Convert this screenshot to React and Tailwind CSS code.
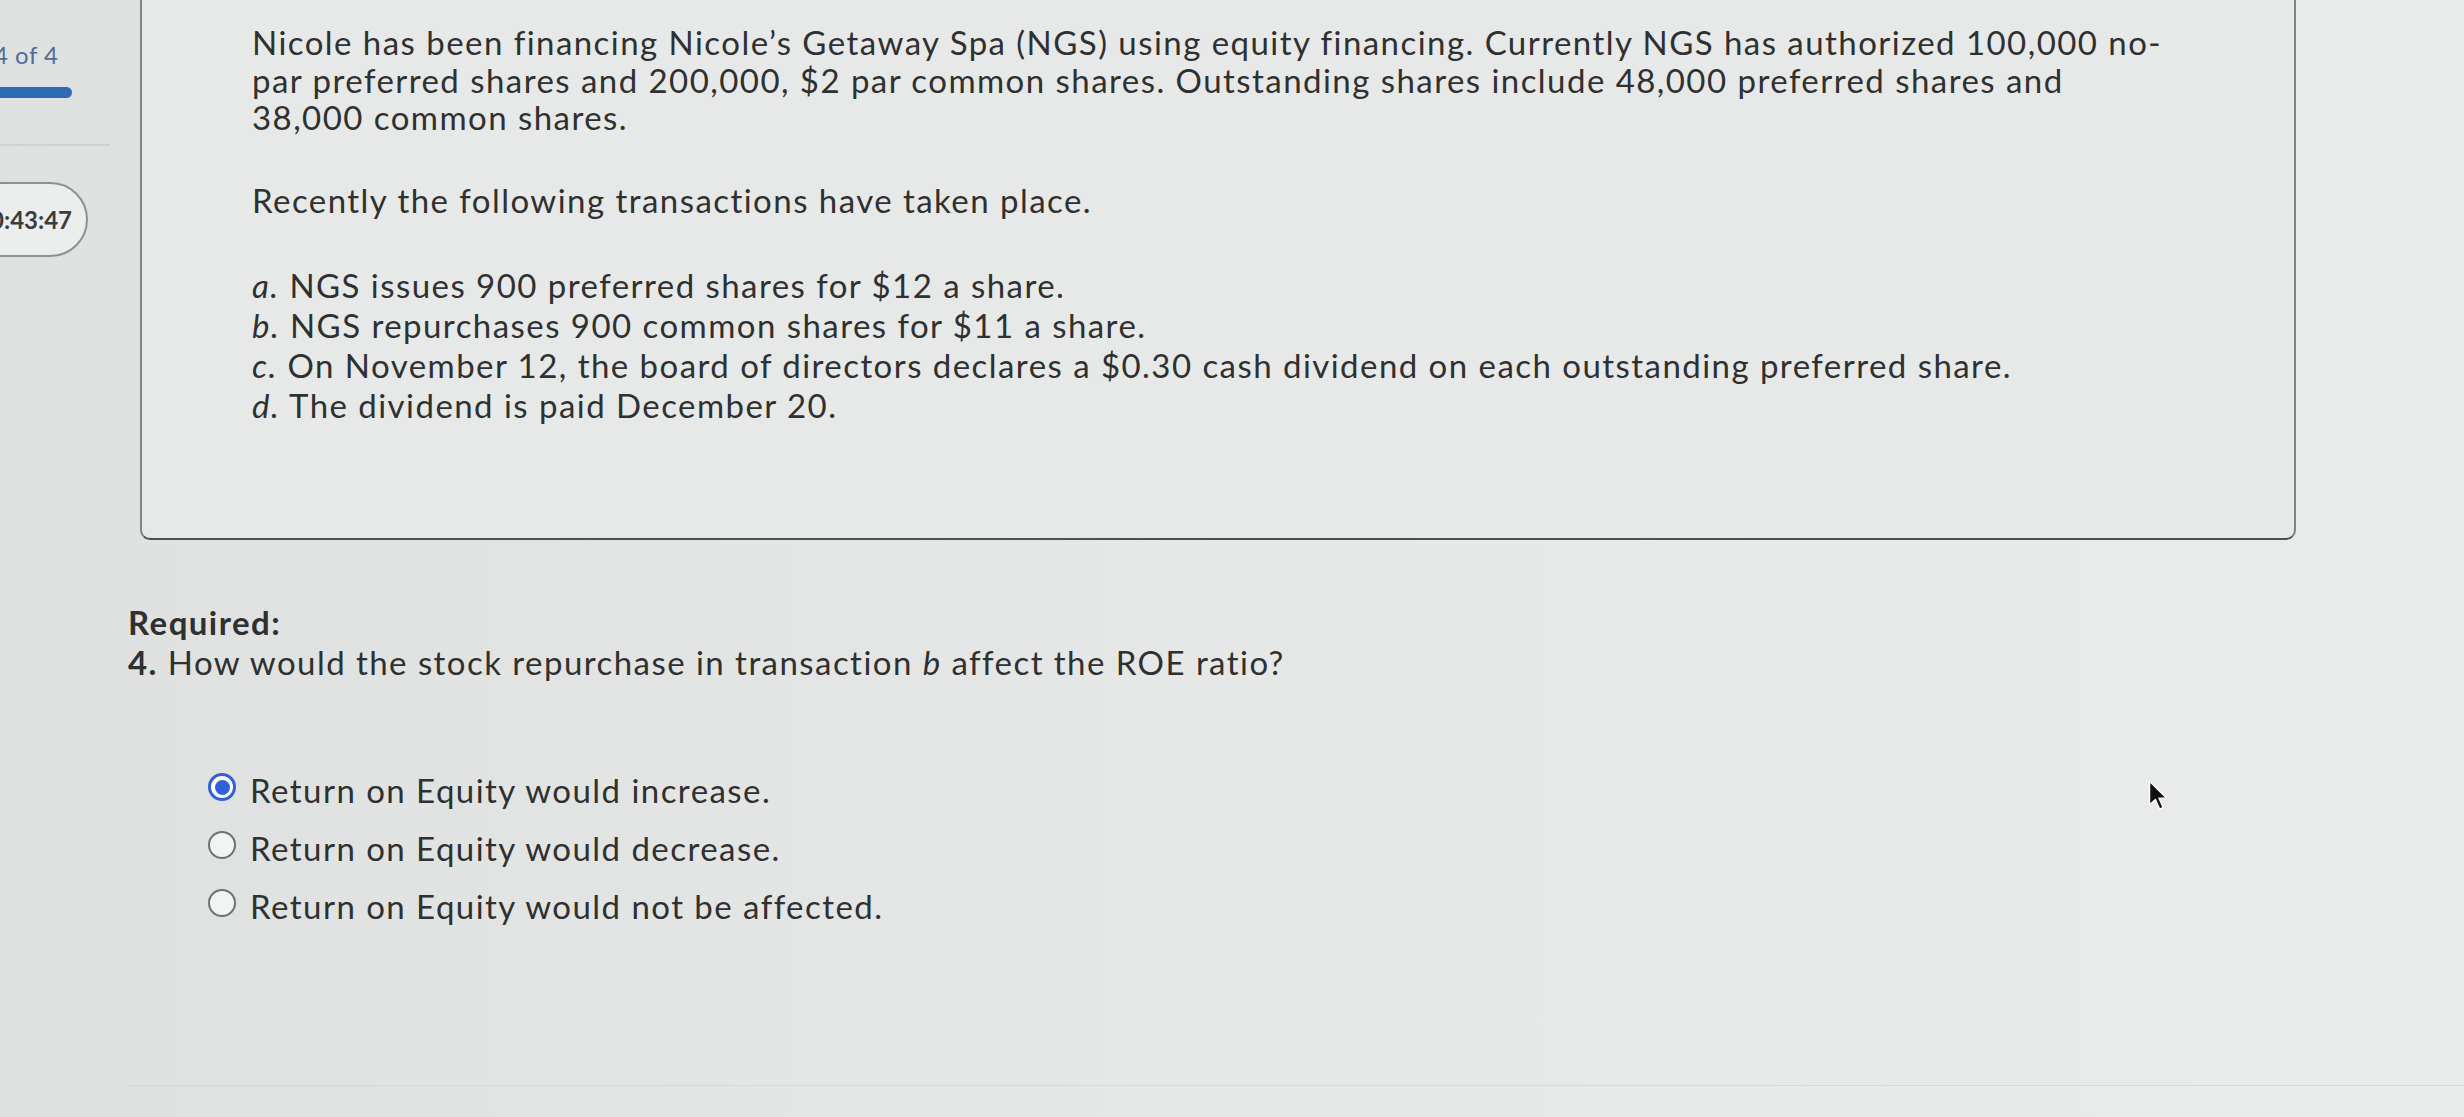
import React from 'react'

const paragraph = [
  'Nicole has been financing Nicole\u2019s Getaway Spa (NGS) using equity financing. Currently NGS has authorized 100,000 no-',
  'par preferred shares and 200,000, $2 par common shares. Outstanding shares include 48,000 preferred shares and',
  '38,000 common shares.',
]

const transactions = [
  ['a.', 'NGS issues 900 preferred shares for $12 a share.'],
  ['b.', 'NGS repurchases 900 common shares for $11 a share.'],
  ['c.', 'On November 12, the board of directors declares a $0.30 cash dividend on each outstanding preferred share.'],
  ['d.', 'The dividend is paid December 20.'],
]

const options = [
  'Return on Equity would increase.',
  'Return on Equity would decrease.',
  'Return on Equity would not be affected.',
]

function Radio({ checked }) {
  if (checked) {
    return (
      <span className="mb-[6px] flex h-[28px] w-[28px] shrink-0 items-center justify-center rounded-full border-[3px] border-[#2f62d6] bg-white">
        <span className="h-[15px] w-[15px] rounded-full bg-[#2f62d6]" />
      </span>
    )
  }
  return <span className="mb-[6px] h-[28px] w-[28px] shrink-0 rounded-full border-2 border-[#6f7272] bg-[#f2f3f3]" />
}

export default function App() {
  return (
    <div className="relative flex h-[1117px] w-full overflow-hidden bg-gradient-to-r from-[#dfe1e0] via-[#e6e8e7] to-[#eaeceb] font-[Lato,sans-serif] text-[#2f3030]">
      {/* left rail, cut off by the photo edge */}
      <aside className="flex w-[128px] shrink-0 flex-col overflow-hidden">
        <div className="-ml-[6px] mt-[40px] whitespace-nowrap text-[24px] leading-[30px] tracking-[0.5px] text-[#4f6d9a]">4 of 4</div>
        <div className="mt-[17px] h-[11px] w-[72px] rounded-r-full bg-[#2d6cb5]" />
        <div className="mt-[46px] h-[2px] w-[110px] bg-[#cfd1d0]" />
        <div className="-ml-[52px] mt-[36px] flex h-[75px] w-[140px] shrink-0 items-center justify-end rounded-full border-2 border-[#8e9190] bg-[#eceeed] pr-[14px] text-[24px] font-bold text-[#3b3c3c]">
          0:43:47
        </div>
      </aside>

      <main className="flex min-w-0 flex-1 flex-col tracking-[1.45px]">
        <section className="-mt-[20px] ml-[12px] h-[560px] w-[2156px] shrink-0 rounded-[10px] border-2 border-[#808384] border-b-[#4d5052] bg-[#e7e9e8] pl-[110px] pt-[42px] text-[33px]">
          <p className="leading-[37.5px]">
            {paragraph.map(line => (
              <span key={line} className="block whitespace-nowrap">{line}</span>
            ))}
          </p>
          <p className="mt-[45px] leading-[37.5px]">Recently the following transactions have taken place.</p>
          <ul className="mt-[46px] leading-[40px]">
            {transactions.map(([k, t]) => (
              <li key={k} className="whitespace-nowrap">
                <i>{k}</i> {t}
              </li>
            ))}
          </ul>
        </section>

        <div className="mt-[62px] text-[33px] leading-[40px]">
          <p className="font-bold">Required:</p>
          <p>
            <b>4.</b> How would the stock repurchase in transaction <i>b</i> affect the ROE ratio?
          </p>
        </div>

        <div className="mt-[88px] flex flex-col gap-[18px] pl-[80px] text-[33px]">
          {options.map((o, i) => (
            <label key={o} className="flex h-[40px] items-center gap-[14px] whitespace-nowrap">
              <Radio checked={i === 0} />
              <span className="leading-[40px]">{o}</span>
            </label>
          ))}
        </div>

        <div className="mt-auto h-[32px] border-t border-[#d8dad9]" />
      </main>

      {/* mouse pointer */}
      <svg className="absolute left-[2148px] top-[780px]" width="22" height="32" viewBox="0 0 18 27">
        <path d="M1 1 L1 21 L6 16.5 L9.5 24.5 L12.5 23.2 L9 15.3 L15.5 15.3 Z" fill="#111" stroke="#fff" strokeWidth="1.2" strokeLinejoin="round" />
      </svg>
    </div>
  )
}
